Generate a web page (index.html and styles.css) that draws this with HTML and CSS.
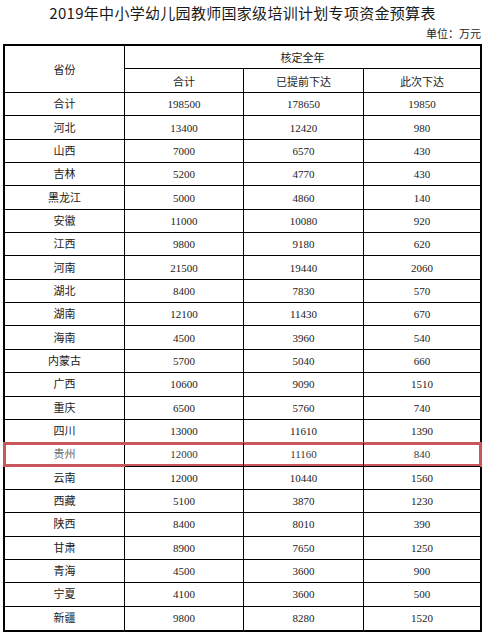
FILE: index.html
```html
<!DOCTYPE html>
<html lang="zh-CN">
<head>
<meta charset="utf-8">
<title>2019年中小学幼儿园教师国家级培训计划专项资金预算表</title>
<link rel="stylesheet" href="styles.css">
</head>
<body>
<div class="page">
  <h1 class="title">2019年中小学幼儿园教师国家级培训计划专项资金预算表</h1>
  <div class="unit">单位：万元</div>
  <div class="sheet">
    <div class="cell head prov">省份</div>
    <div class="cell head span3">核定全年</div>
    <div class="cell head">合计</div>
    <div class="cell head">已提前下达</div>
    <div class="cell head last">此次下达</div>

    <div class="row"><div class="cell">合计</div><div class="cell">198500</div><div class="cell">178650</div><div class="cell last">19850</div></div>
    <div class="row"><div class="cell">河北</div><div class="cell">13400</div><div class="cell">12420</div><div class="cell last">980</div></div>
    <div class="row"><div class="cell">山西</div><div class="cell">7000</div><div class="cell">6570</div><div class="cell last">430</div></div>
    <div class="row"><div class="cell">吉林</div><div class="cell">5200</div><div class="cell">4770</div><div class="cell last">430</div></div>
    <div class="row"><div class="cell">黑龙江</div><div class="cell">5000</div><div class="cell">4860</div><div class="cell last">140</div></div>
    <div class="row"><div class="cell">安徽</div><div class="cell">11000</div><div class="cell">10080</div><div class="cell last">920</div></div>
    <div class="row"><div class="cell">江西</div><div class="cell">9800</div><div class="cell">9180</div><div class="cell last">620</div></div>
    <div class="row"><div class="cell">河南</div><div class="cell">21500</div><div class="cell">19440</div><div class="cell last">2060</div></div>
    <div class="row"><div class="cell">湖北</div><div class="cell">8400</div><div class="cell">7830</div><div class="cell last">570</div></div>
    <div class="row"><div class="cell">湖南</div><div class="cell">12100</div><div class="cell">11430</div><div class="cell last">670</div></div>
    <div class="row"><div class="cell">海南</div><div class="cell">4500</div><div class="cell">3960</div><div class="cell last">540</div></div>
    <div class="row"><div class="cell">内蒙古</div><div class="cell">5700</div><div class="cell">5040</div><div class="cell last">660</div></div>
    <div class="row"><div class="cell">广西</div><div class="cell">10600</div><div class="cell">9090</div><div class="cell last">1510</div></div>
    <div class="row"><div class="cell">重庆</div><div class="cell">6500</div><div class="cell">5760</div><div class="cell last">740</div></div>
    <div class="row"><div class="cell">四川</div><div class="cell">13000</div><div class="cell">11610</div><div class="cell last">1390</div></div>
    <div class="row marked"><div class="cell">贵州</div><div class="cell">12000</div><div class="cell">11160</div><div class="cell last">840</div></div>
    <div class="row"><div class="cell">云南</div><div class="cell">12000</div><div class="cell">10440</div><div class="cell last">1560</div></div>
    <div class="row"><div class="cell">西藏</div><div class="cell">5100</div><div class="cell">3870</div><div class="cell last">1230</div></div>
    <div class="row"><div class="cell">陕西</div><div class="cell">8400</div><div class="cell">8010</div><div class="cell last">390</div></div>
    <div class="row"><div class="cell">甘肃</div><div class="cell">8900</div><div class="cell">7650</div><div class="cell last">1250</div></div>
    <div class="row"><div class="cell">青海</div><div class="cell">4500</div><div class="cell">3600</div><div class="cell last">900</div></div>
    <div class="row"><div class="cell">宁夏</div><div class="cell">4100</div><div class="cell">3600</div><div class="cell last">500</div></div>
    <div class="row bottom"><div class="cell">新疆</div><div class="cell">9800</div><div class="cell">8280</div><div class="cell last">1520</div></div>
  </div>
</div>
</body>
</html>
```

FILE: styles.css
```css
*, *::before, *::after { box-sizing: border-box; }
html, body { margin: 0; padding: 0; background: #ffffff; }
body {
  font-family: "Liberation Serif", "Noto Sans CJK SC", serif;
  color: #222222;
  width: 486px;
  height: 635px;
  overflow: hidden;
}
.page {
  padding: 3px 4px 0 3px;
  display: flex;
  flex-direction: column;
}
.title {
  margin: 0;
  font-family: "Noto Sans CJK SC", sans-serif;
  font-weight: normal;
  font-size: 15px;
  letter-spacing: 0.3px;
  line-height: 20px;
  height: 20px;
  text-align: center;
  color: #1a1a1a;
}
.unit {
  margin-top: 3px;
  height: 18px;
  line-height: 14px;
  font-size: 11px;
  font-family: "Noto Sans CJK SC", sans-serif;
  text-align: right;
  padding-right: 1px;
  color: #222222;
}
.sheet {
  width: 479px;
  height: 588px;
  border: 2px solid #000000;
  display: grid;
  grid-template-columns: 120px 119px 120px 116px;
  grid-template-rows: 23px 24px repeat(23, 1fr);
}
.row {
  display: contents;
}
.cell {
  display: flex;
  align-items: center;
  justify-content: center;
  border-right: 1px solid #000000;
  border-bottom: 1px solid #000000;
  font-size: 11px;
  line-height: 12px;
  font-family: "Liberation Serif", "Noto Sans CJK SC", serif;
  color: #222222;
}
.cell.last { border-right: none; }
.row.bottom .cell { border-bottom: none; }
.head {
  font-family: "Noto Sans CJK SC", sans-serif;
}
.prov { grid-row: span 2; }
.span3 { grid-column: span 3; border-right: none; }
.row.marked .cell {
  color: #3a3a3a;
  position: relative;
}
.row.marked .cell:first-child { color: #666666; }
.row.marked .cell:first-child::after {
  content: "";
  position: absolute;
  left: -2px;
  top: -1px;
  width: 479px;
  height: 25px;
  border: 3px solid #c9565b;
  pointer-events: none;
}
```
